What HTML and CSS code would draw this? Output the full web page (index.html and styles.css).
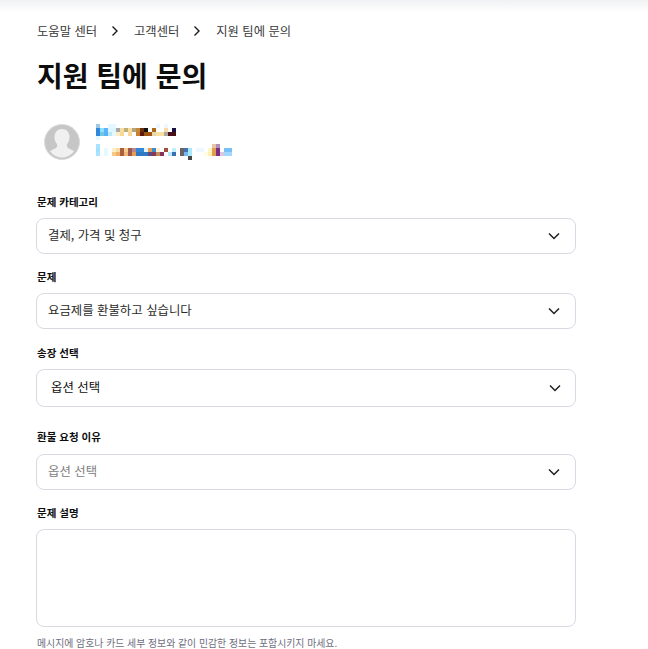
FILE: index.html
```html
<!DOCTYPE html>
<html lang="ko">
<head>
    <meta charset="UTF-8">
    <meta name="viewport" content="width=device-width, initial-scale=1.0">
    <title>지원 팀에 문의</title>
    <link rel="stylesheet" href="styles.css">
</head>
<body>
    <div class="top-shadow"></div>
    <main class="page">
        <nav class="crumbs">
            <a href="#">도움말 센터</a>
            <svg class="crumb-sep" width="8" height="12" viewBox="0 0 8 12"><path d="M1.500 1.500 6 6l-4.500 4.500" fill="none" stroke="#1a1a1a" stroke-width="1.400"/></svg>
            <a href="#">고객센터</a>
            <svg class="crumb-sep" width="8" height="12" viewBox="0 0 8 12"><path d="M1.500 1.500 6 6l-4.500 4.500" fill="none" stroke="#1a1a1a" stroke-width="1.400"/></svg>
            <a href="#">지원 팀에 문의</a>
        </nav>

        <h1>지원 팀에 문의</h1>

        <div class="account">
            <svg class="avatar" width="36" height="36" viewBox="0 0 36 36">
                <circle cx="18" cy="18" r="17.500" fill="#c6c6c6" stroke="#dcdcdc"/>
                <path d="M18 5c-4.500 0-7.500 3.500-7.500 8 0 3 1 5.500 2.500 7 .5 2 0 3.500-1.500 4.200L6 27c2.500 4 7 6.500 12 6.500S27.500 31 30 27l-5.500-2.800c-1.500-.7-2-2.200-1.500-4.200 1.500-1.500 2.500-4 2.500-7 0-4.500-3-8-7.500-8z" fill="#f0f0f0"/>
            </svg>
            <!-- blurred account name and email -->
            <svg class="blur" width="140" height="36" viewBox="0 0 35 9" shape-rendering="crispEdges">
                <g>
                    <rect x="0" y="0" width="1" height="1" fill="#9cc8e8"/>
                    <rect x="3" y="0" width="2" height="1" fill="#e6f8ff"/>
                    <rect x="15" y="0" width="1" height="1" fill="#eef6ff"/>
                    <rect x="17" y="0" width="1" height="1" fill="#f0f8ff"/>

                    <rect x="0" y="1" width="1" height="1" fill="#2f88dc"/>
                    <rect x="1" y="1" width="1" height="1" fill="#8ee0ff"/>
                    <rect x="2" y="1" width="1" height="1" fill="#5ab4f8"/>
                    <rect x="3" y="1" width="2" height="1" fill="#e0f6ff"/>
                    <rect x="5" y="1" width="1" height="1" fill="#a8a8a8"/>
                    <rect x="6" y="1" width="1" height="1" fill="#f8dca0"/>
                    <rect x="7" y="1" width="1" height="1" fill="#c0b078"/>
                    <rect x="8" y="1" width="1" height="1" fill="#f8dca0"/>
                    <rect x="9" y="1" width="1" height="1" fill="#b0a878"/>
                    <rect x="10" y="1" width="1" height="1" fill="#c88838"/>
                    <rect x="11" y="1" width="1" height="1" fill="#6a3010"/>
                    <rect x="12" y="1" width="1" height="1" fill="#101010"/>
                    <rect x="14" y="1" width="1" height="1" fill="#b06818"/>
                    <rect x="17" y="1" width="1" height="1" fill="#f8dca8"/>
                    <rect x="19" y="1" width="1" height="1" fill="#1a1040"/>

                    <rect x="0" y="2" width="1" height="1" fill="#3088dc"/>
                    <rect x="1" y="2" width="1" height="1" fill="#70c8e0"/>
                    <rect x="2" y="2" width="1" height="1" fill="#58b0f8"/>
                    <rect x="3" y="2" width="1" height="1" fill="#b8e8f8"/>
                    <rect x="4" y="2" width="1" height="1" fill="#e6f8ff"/>
                    <rect x="5" y="2" width="1" height="1" fill="#ffecc0"/>
                    <rect x="6" y="2" width="1" height="1" fill="#f8d898"/>
                    <rect x="8" y="2" width="1" height="1" fill="#f8d898"/>
                    <rect x="10" y="2" width="1" height="1" fill="#c88030"/>
                    <rect x="11" y="2" width="1" height="1" fill="#5a1a10"/>
                    <rect x="12" y="2" width="2" height="1" fill="#a05414"/>
                    <rect x="14" y="2" width="1" height="1" fill="#e8d8a8"/>
                    <rect x="15" y="2" width="2" height="1" fill="#f8e0a0"/>
                    <rect x="17" y="2" width="1" height="1" fill="#b0a8a0"/>
                    <rect x="18" y="2" width="2" height="1" fill="#4a1018"/>

                    <rect x="0" y="3" width="1" height="1" fill="#e0faff"/>
                </g>
                <g>
                    <rect x="29" y="5" width="1" height="1" fill="#e8c4a8"/>
                    <rect x="30" y="5" width="1" height="1" fill="#b090b8"/>

                    <rect x="0" y="5" width="1" height="1" fill="#a8e4ff"/>
                    <rect x="2" y="6" width="1" height="1" fill="#e4faff"/>
                    <rect x="0" y="6" width="1" height="1" fill="#a0e0ff"/>
                    <rect x="4" y="6" width="1" height="1" fill="#fff0c8"/>
                    <rect x="5" y="6" width="1" height="1" fill="#f8dca8"/>
                    <rect x="6" y="6" width="1" height="1" fill="#a86040"/>
                    <rect x="7" y="6" width="1" height="1" fill="#f8cc90"/>
                    <rect x="8" y="6" width="1" height="1" fill="#a05848"/>
                    <rect x="9" y="6" width="1" height="1" fill="#b88890"/>
                    <rect x="10" y="6" width="2" height="1" fill="#3088d8"/>
                    <rect x="12" y="6" width="1" height="1" fill="#e8f0f8"/>
                    <rect x="13" y="6" width="1" height="1" fill="#e0a050"/>
                    <rect x="14" y="6" width="1" height="1" fill="#4088d0"/>
                    <rect x="15" y="6" width="1" height="1" fill="#fff0d0"/>
                    <rect x="17" y="6" width="1" height="1" fill="#a05040"/>
                    <rect x="19" y="6" width="1" height="1" fill="#c0f0ff"/>
                    <rect x="21" y="6" width="1" height="1" fill="#686468"/>
                    <rect x="22" y="6" width="1" height="1" fill="#4870b0"/>
                    <rect x="23" y="6" width="1" height="1" fill="#a8e8ff"/>
                    <rect x="25" y="6" width="2" height="1" fill="#eef8ff"/>
                    <rect x="28" y="6" width="1" height="1" fill="#fff4c8"/>
                    <rect x="29" y="6" width="1" height="1" fill="#e0a050"/>
                    <rect x="30" y="6" width="1" height="1" fill="#7a3080"/>
                    <rect x="32" y="6" width="2" height="1" fill="#78c0f8"/>

                    <rect x="0" y="7" width="1" height="1" fill="#a8e4ff"/>
                    <rect x="2" y="7" width="1" height="1" fill="#e4faff"/>
                    <rect x="4" y="7" width="1" height="1" fill="#f8c888"/>
                    <rect x="5" y="7" width="1" height="1" fill="#f0b068"/>
                    <rect x="6" y="7" width="1" height="1" fill="#a86040"/>
                    <rect x="7" y="7" width="1" height="1" fill="#f0b878"/>
                    <rect x="8" y="7" width="1" height="1" fill="#a05850"/>
                    <rect x="9" y="7" width="1" height="1" fill="#e8a050"/>
                    <rect x="10" y="7" width="3" height="1" fill="#3078c0"/>
                    <rect x="13" y="7" width="1" height="1" fill="#604880"/>
                    <rect x="14" y="7" width="1" height="1" fill="#883858"/>
                    <rect x="15" y="7" width="1" height="1" fill="#c09060"/>
                    <rect x="16" y="7" width="1" height="1" fill="#883060"/>
                    <rect x="18" y="7" width="1" height="1" fill="#b8e8ff"/>
                    <rect x="19" y="7" width="1" height="1" fill="#3870b8"/>
                    <rect x="21" y="7" width="1" height="1" fill="#686468"/>
                    <rect x="22" y="7" width="1" height="1" fill="#78b8f0"/>
                    <rect x="23" y="7" width="1" height="1" fill="#a8e8ff"/>
                    <rect x="27" y="7" width="1" height="1" fill="#fffce0"/>
                    <rect x="28" y="7" width="1" height="1" fill="#fff0b8"/>
                    <rect x="29" y="7" width="1" height="1" fill="#e0a050"/>
                    <rect x="30" y="7" width="1" height="1" fill="#7a3080"/>
                    <rect x="31" y="7" width="1" height="1" fill="#d8c8e0"/>
                    <rect x="32" y="7" width="2" height="1" fill="#a0d8ff"/>

                    <rect x="23" y="8" width="1" height="1" fill="#484848"/>
                </g>
            </svg>
        </div>

        <form class="contact-form">
            <div class="field">
                <label for="category">문제 카테고리</label>
                <div class="select-wrap">
                    <select id="category"><option>결제, 가격 및 청구</option></select>
                    <svg class="chevron" width="12" height="8" viewBox="0 0 12 8"><path d="M1 1.500l5 5 5-5" fill="none" stroke="#1f1f24" stroke-width="1.500"/></svg>
                </div>
            </div>
            <div class="field">
                <label for="issue">문제</label>
                <div class="select-wrap">
                    <select id="issue"><option>요금제를 환불하고 싶습니다</option></select>
                    <svg class="chevron" width="12" height="8" viewBox="0 0 12 8"><path d="M1 1.500l5 5 5-5" fill="none" stroke="#1f1f24" stroke-width="1.500"/></svg>
                </div>
            </div>
            <div class="field invoice">
                <label for="invoice">송장 선택</label>
                <div class="select-wrap">
                    <select id="invoice"><option>옵션 선택</option></select>
                    <svg class="chevron" width="12" height="8" viewBox="0 0 12 8"><path d="M1 1.500l5 5 5-5" fill="none" stroke="#1f1f24" stroke-width="1.500"/></svg>
                </div>
            </div>
            <div class="field reason">
                <label for="reason">환불 요청 이유</label>
                <div class="select-wrap">
                    <select id="reason"><option>옵션 선택</option></select>
                    <svg class="chevron" width="12" height="8" viewBox="0 0 12 8"><path d="M1 1.500l5 5 5-5" fill="none" stroke="#1f1f24" stroke-width="1.500"/></svg>
                </div>
            </div>
            <div class="field">
                <label for="description">문제 설명</label>
                <textarea id="description"></textarea>
                <p class="hint">메시지에 암호나 카드 세부 정보와 같이 민감한 정보는 포함시키지 마세요.</p>
            </div>
        </form>
    </main>
</body>
</html>
```

FILE: styles.css
```css
html, body {
    height: 100%;
    overflow: hidden;
}

body {
    margin: 0;
    font-family: "Noto Sans CJK KR", "Noto Sans", sans-serif;
    color: #0d0d0d;
    background: white;
}

.top-shadow {
    height: 12px;
    margin-bottom: -12px;
    background: linear-gradient(#f0f1f3, #ffffff);
}

.page {
    width: 540px;
    padding: 22px 0 0 36px;
}

.crumbs {
    display: flex;
    align-items: center;
    height: 18px;
    padding-left: 1px;
    font-size: 12.300px;
}

.crumbs a {
    color: #3a3a3a;
    text-decoration: none;
}

.crumb-sep {
    margin: 0 15px 0 14px;
}

h1 {
    margin: 15px 0 0 1px;
    font-size: 28px;
    line-height: 40px;
    font-weight: 700;
}

.account {
    display: flex;
    align-items: center;
    gap: 16px;
    margin: 29px 0 0 8px;
}

.contact-form {
    display: flex;
    flex-direction: column;
    margin-top: 34px;
}

.field {
    margin-bottom: 15px;
}

.field.invoice {
    margin-top: 1px;
    margin-bottom: 22px;
}

.field label {
    display: block;
    height: 16px;
    margin: 0 0 8px 1px;
    font-size: 10.500px;
    line-height: 16px;
    font-weight: 700;
}

.field.reason label {
    margin-bottom: 9px;
}

.select-wrap {
    position: relative;
}

select {
    display: block;
    width: 100%;
    height: 36px;
    padding: 0 40px 2px 11px;
    border: 1px solid #d9d9e3;
    border-radius: 8px;
    background: white;
    color: #2a2a2a;
    font: 12.400px "Noto Sans CJK KR", "Noto Sans", sans-serif;
    appearance: none;
}

.invoice select {
    height: 38px;
    padding-left: 14px;
    color: #0d0d0d;
}

.reason select {
    color: #808080;
}

.chevron {
    position: absolute;
    top: 50%;
    right: 16px;
    margin-top: -4px;
}

.invoice .chevron {
    right: 15px;
}

textarea {
    display: block;
    box-sizing: border-box;
    width: 100%;
    height: 98px;
    border: 1px solid #d9d9e3;
    border-radius: 8px;
    resize: none;
}

.hint {
    margin: 8px 0 0 1px;
    font-size: 9.900px;
    line-height: 16px;
    color: #6e6e80;
}
```
